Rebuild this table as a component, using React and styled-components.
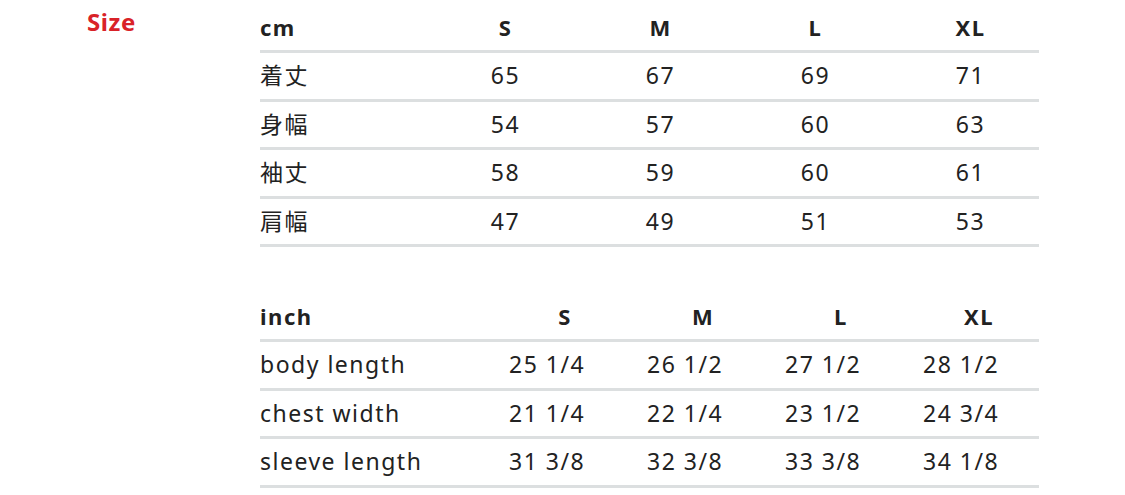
import React from "react";
import styled, { createGlobalStyle } from "styled-components";

const cmRows = [
  ["着丈", "65", "67", "69", "71"],
  ["身幅", "54", "57", "60", "63"],
  ["袖丈", "58", "59", "60", "61"],
  ["肩幅", "47", "49", "51", "53"],
];

const inchRows = [
  ["body length", "25 1/4", "26 1/2", "27 1/2", "28 1/2"],
  ["chest width", "21 1/4", "22 1/4", "23 1/2", "24 3/4"],
  ["sleeve length", "31 3/8", "32 3/8", "33 3/8", "34 1/8"],
];

const sizes = ["S", "M", "L", "XL"];

const layouts = {
  cm: "168px 155px 155px 155px 146px",
  inch: "249px 138px 138px 138px 116px",
};

const SizeTable = ({ unit, rows }) => (
  <Table>
    <Row $cols={layouts[unit]}>
      <Label $head>{unit}</Label>
      {sizes.map((s) => (
        <Value key={s} $head $unit={unit}>
          {s}
        </Value>
      ))}
    </Row>
    {rows.map(([label, ...vals]) => (
      <Row key={label} $cols={layouts[unit]}>
        <Label>{label}</Label>
        {vals.map((v, i) => (
          <Value key={i} $unit={unit}>
            {v}
          </Value>
        ))}
      </Row>
    ))}
  </Table>
);

const App = () => (
  <>
    <GlobalStyle />
    <Page>
      <Side>
        <Heading>Size</Heading>
      </Side>
      <Tables>
        <SizeTable unit="cm" rows={cmRows} />
        <SizeTable unit="inch" rows={inchRows} />
      </Tables>
    </Page>
  </>
);

export default App;

// STYLES

const GlobalStyle = createGlobalStyle`
  body {
    margin: 0;
    background: #fff;
    font-family: "Noto Sans", "Noto Sans CJK JP", sans-serif;
    color: #222;
  }
`;

const Page = styled.div`
  display: flex;
  padding-top: 4px;
`;

const Side = styled.div`
  width: 260px;
  padding-left: 87px;
  box-sizing: border-box;
`;

const Heading = styled.h2`
  margin: 0;
  padding-top: 2px;
  font-size: 24px;
  font-weight: 700;
  letter-spacing: 0.6px;
  line-height: 32px;
  color: #d92228;
`;

const Tables = styled.div`
  width: 779px;
  display: flex;
  flex-direction: column;
  gap: 46px;
`;

const Table = styled.div`
  display: flex;
  flex-direction: column;
`;

const Row = styled.div`
  display: grid;
  grid-template-columns: ${(p) => p.$cols};
  height: 46px;
  align-items: center;
  border-bottom: 3px solid #dcdfe0;
  font-size: 23px;
  letter-spacing: 1.5px;
  line-height: 1;
  &:not(:first-child) {
    height: 45.5px;
  }
`;

const Label = styled.div`
  font-weight: ${(p) => (p.$head ? 700 : 400)};
  font-size: ${(p) => (p.$head ? "22px" : "inherit")};
`;

const Value = styled.div`
  font-weight: ${(p) => (p.$head ? 700 : 400)};
  font-size: ${(p) => (p.$head ? "22px" : "inherit")};
  white-space: nowrap;
  ${(p) =>
    p.$unit === "cm"
      ? `width: 155px; text-align: center;`
      : p.$head
      ? `width: 112px; text-align: center;`
      : `text-align: left;`}
`;
